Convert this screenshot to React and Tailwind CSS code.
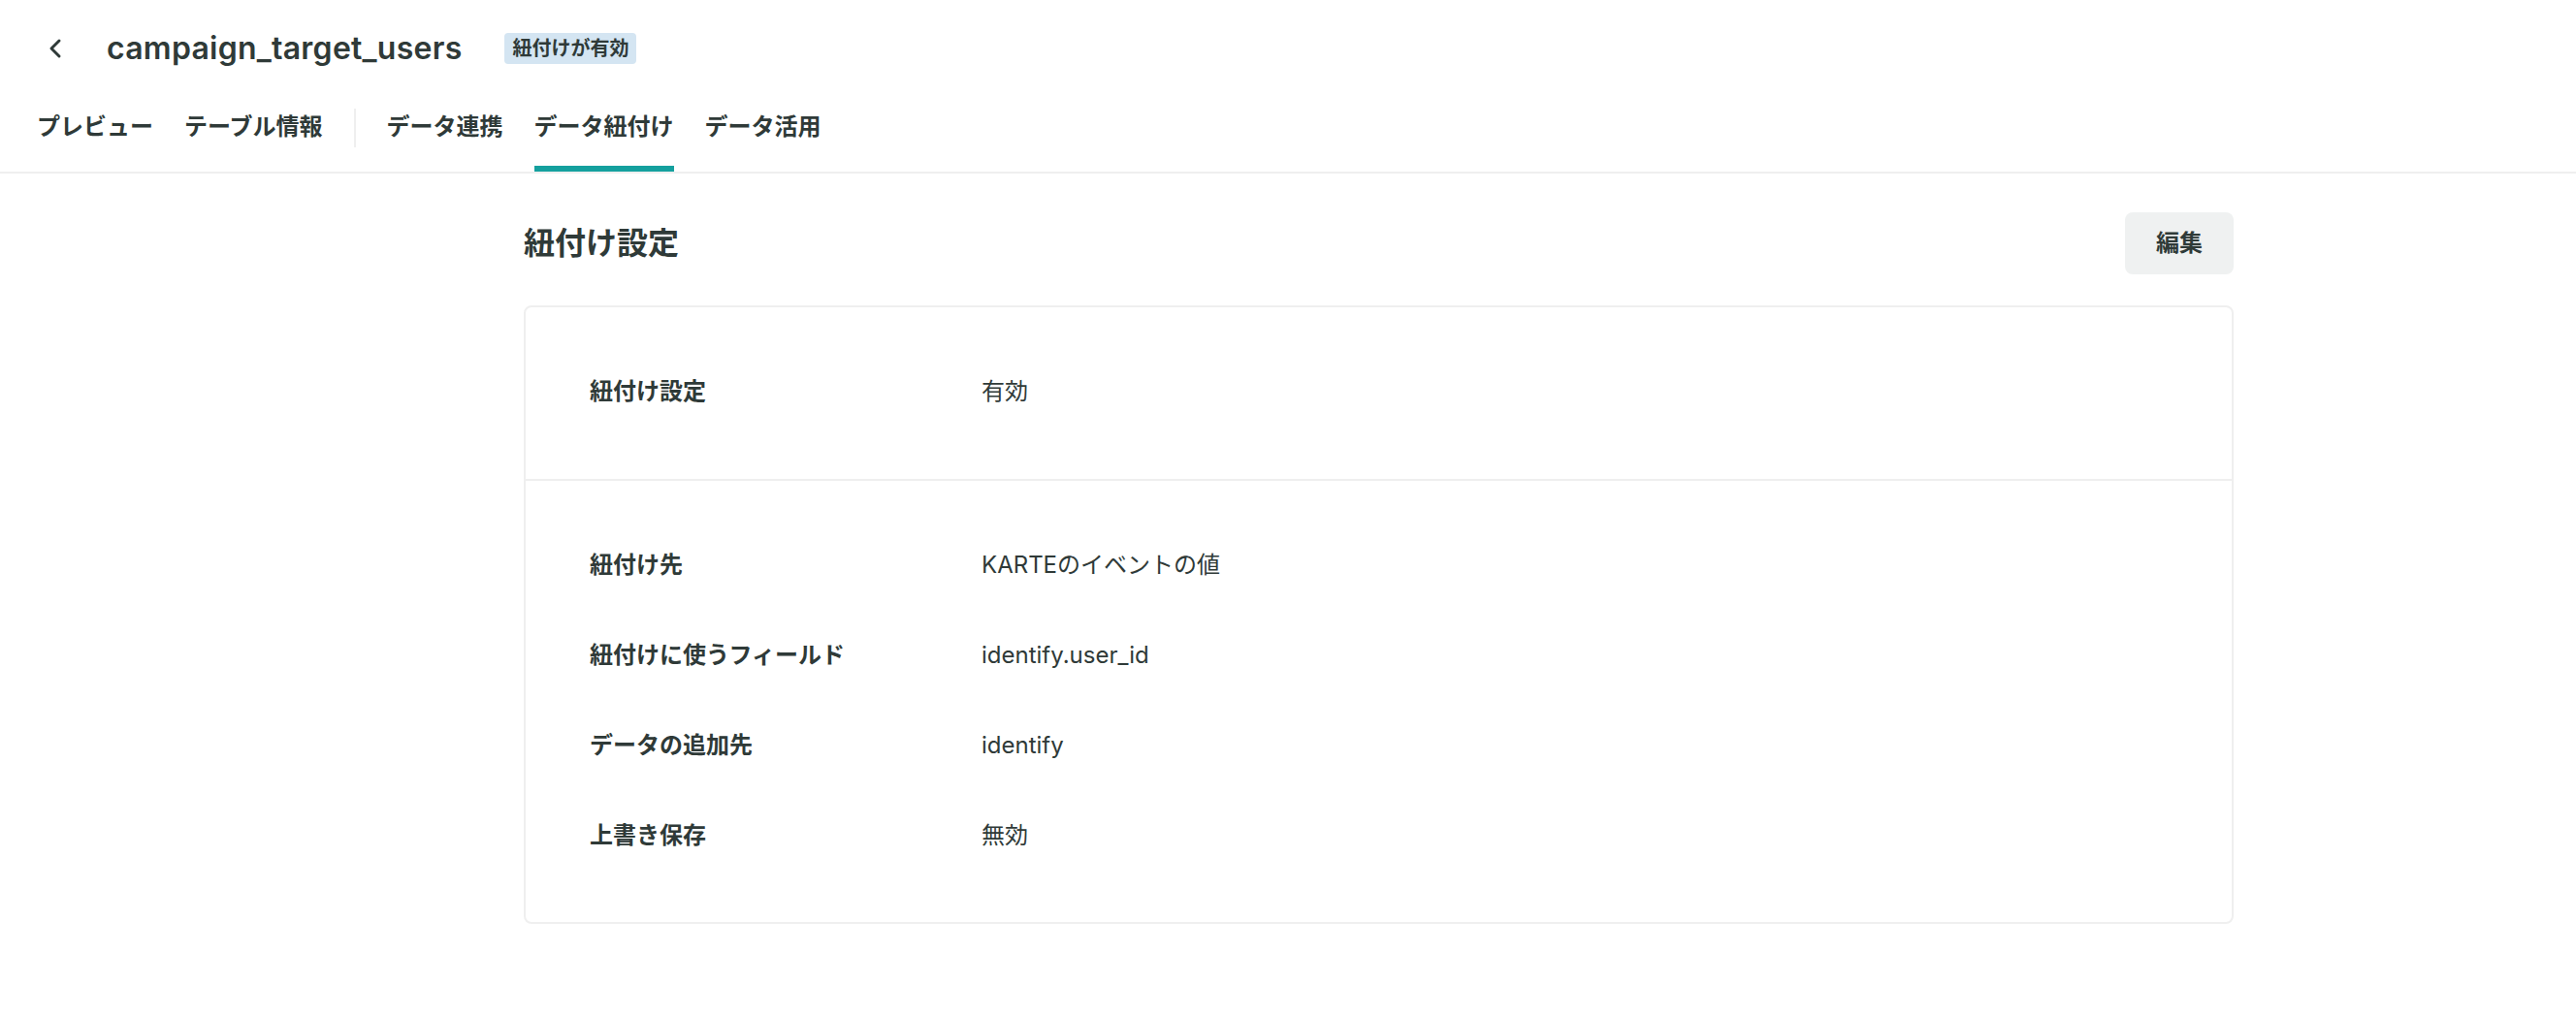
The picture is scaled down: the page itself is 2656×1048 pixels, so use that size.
import React from 'react'

const tabs = [
  { label: 'プレビュー' },
  { label: 'テーブル情報' },
  { divider: true },
  { label: 'データ連携' },
  { label: 'データ紐付け', active: true },
  { label: 'データ活用' },
]

const details = [
  { label: '紐付け先', value: 'KARTEのイベントの値' },
  { label: '紐付けに使うフィールド', value: 'identify.user_id' },
  { label: 'データの追加先', value: 'identify' },
  { label: '上書き保存', value: '無効' },
]

function Row({ label, value }) {
  return (
    <div className="flex items-center h-[93px]">
      <div className="w-[404px] shrink-0 text-[24px] leading-[36px] font-bold">{label}</div>
      <div className="text-[24px] leading-[36px]">{value}</div>
    </div>
  )
}

export default function App() {
  return (
    <div className="min-h-screen bg-white text-[#2f3a38] font-[Inter,'Noto_Sans_CJK_JP',sans-serif]">
      {/* Header */}
      <div className="border-b-2 border-[#efefef]">
        <div className="flex items-center h-[100px] pl-[48px]">
          <button className="w-[16px] h-[24px] flex items-center justify-center">
            <svg width="16" height="24" viewBox="0 0 16 24" fill="none" stroke="#2f3a38" strokeWidth="3" strokeLinecap="round" strokeLinejoin="round">
              <path d="M13 4L5 12l8 8" />
            </svg>
          </button>
          <h1 className="ml-[46px] text-[32px] leading-[40px] font-semibold tracking-[0.25px]">campaign_target_users</h1>
          <span className="ml-[44px] h-[32px] px-[8px] flex items-center rounded-[4px] bg-[#d4e5f2] text-[20px] font-bold">
            紐付けが有効
          </span>
        </div>

        <div className="flex h-[77px] pl-[38px] gap-8">
          {tabs.map((t, i) =>
            t.divider ? (
              <div key={i} className="w-[2px] h-[40px] mt-[12px] bg-[#efefef]" />
            ) : (
              <div
                key={i}
                className={`pt-[13px] text-[24px] leading-[36px] font-bold border-b-[6px] ${t.active ? 'border-[#14a09e]' : 'border-transparent'}`}
              >
                {t.label}
              </div>
            )
          )}
        </div>
      </div>

      {/* Content */}
      <div className="pl-[540px] pt-[40px]">
        <div className="w-[1763px]">
          <div className="flex items-center justify-between h-[64px]">
            <h2 className="text-[32px] leading-[44px] font-bold">紐付け設定</h2>
            <button className="h-[64px] px-[32px] rounded-[8px] bg-[#eff1f1] text-[24px] font-bold">編集</button>
          </div>

          <div className="mt-[32px] border-2 border-[#efefef] rounded-[8px]">
            <div className="px-[66px] pt-[40px] pb-[44px] border-b-2 border-[#efefef]">
              <Row label="紐付け設定" value="有効" />
            </div>
            <div className="px-[66px] pt-[40px] pb-[43px]">
              {details.map((d) => (
                <Row key={d.label} label={d.label} value={d.value} />
              ))}
            </div>
          </div>
        </div>
      </div>
    </div>
  )
}
